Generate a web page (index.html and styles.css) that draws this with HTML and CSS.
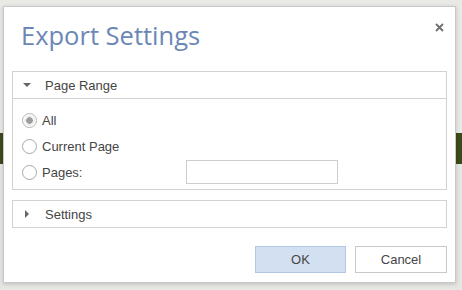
FILE: index.html
```html
<!DOCTYPE html>
<html lang="en">
<head>
  <meta charset="UTF-8">
  <meta name="viewport" content="width=device-width, initial-scale=1.0">
  <title>Export Settings</title>
  <link rel="stylesheet" href="styles.css">
</head>
<body>
<div class="backdrop">
  <div class="dialog">
    <div class="dialog-header">
      <h1 class="dialog-title">Export Settings</h1>
      <button class="close-button" title="Close">
        <svg width="9" height="9" viewBox="0 0 9 9"><path d="M1 1 L8 8 M8 1 L1 8" stroke="#6f6f6f" stroke-width="1.8"/></svg>
      </button>
    </div>

    <div class="section">
      <div class="section-head">
        <svg class="caret" width="8" height="8" viewBox="0 0 8 8"><path d="M0 2 L8 2 L4 6 Z" fill="#666"/></svg>
        <span>Page Range</span>
      </div>
      <div class="section-body">
        <label class="option"><input type="radio" name="range" checked> All</label>
        <label class="option"><input type="radio" name="range"> Current Page</label>
        <div class="option">
          <label class="pages-label"><input type="radio" name="range"> Pages:</label>
          <input type="text" class="pages-input">
        </div>
      </div>
    </div>

    <div class="section">
      <div class="section-head closed">
        <svg class="caret" width="8" height="8" viewBox="0 0 8 8"><path d="M2 0 L6 4 L2 8 Z" fill="#666"/></svg>
        <span>Settings</span>
      </div>
    </div>

    <div class="dialog-buttons">
      <button class="btn btn-primary">OK</button>
      <button class="btn">Cancel</button>
    </div>
  </div>
</div>
</body>
</html>
```

FILE: styles.css
```css
body {
  margin: 0px;
  font-family: "Liberation Sans", Arial, sans-serif;
  color: #454545;
}

.backdrop {
  width: 462px;
  height: 290px;
  padding: 6px 0 0 3px;
  box-sizing: border-box;
  /* the green bar of the page behind the dialog */
  background: linear-gradient(to bottom, #e9e9e6 0px, #e9e9e6 133px, #3c4a1c 133px, #3c4a1c 164px, #e6e6e3 164px);
}

.dialog {
  width: 453px;
  height: 277px;
  box-sizing: border-box;
  background: #ffffff;
  border: 1px solid #c9c9c9;
  box-shadow: 0 1px 4px rgba(0, 0, 0, 0.18);
  padding: 0 8px;
  display: flex;
  flex-direction: column;
}

.dialog-header {
  display: flex;
  justify-content: space-between;
  align-items: flex-start;
  padding: 13px 3px 0 9px;
  height: 51px;
  box-sizing: border-box;
  margin-top: 0;
}

.dialog-title {
  margin: 0;
  font-family: "Open Sans", sans-serif;
  font-weight: 400;
  font-size: 25.5px;
  line-height: 30px;
  color: #6b87b5;
}

.close-button {
  border: none;
  background: none;
  padding: 0;
  margin-top: 3px;
  width: 9px;
  height: 9px;
  cursor: pointer;
}

.close-button svg {
  display: block;
}

.section {
  border: 1px solid #d2d2d2;
  margin-bottom: 10px;
}

.dialog-header + .section {
  margin-top: 13px;
}

.section-head {
  display: flex;
  align-items: center;
  height: 26px;
  font-size: 13px;
  padding-left: 10px;
  gap: 14px;
}

.caret {
  flex-shrink: 0;
}

.section-body {
  border-top: 1px solid #d2d2d2;
  padding: 8px 0 4px 9px;
}

.option {
  display: flex;
  align-items: center;
  height: 26px;
  font-size: 13px;
  gap: 5px;
}

.pages-label {
  display: flex;
  align-items: center;
  gap: 5px;
  width: 159px;
}

.option input[type="radio"] {
  -webkit-appearance: none;
  appearance: none;
  margin: 0;
  width: 15px;
  height: 15px;
  border: 1px solid #a9a9a9;
  border-radius: 50%;
  background: #fff;
  box-sizing: border-box;
}

.option input[type="radio"]:checked {
  border-color: #b4b4b4;
  background: radial-gradient(circle, #9c9c9c 0px, #9c9c9c 3px, #eeeeee 3.5px, #eeeeee 5px, #fff 5.5px);
}

.pages-input {
  width: 152px;
  height: 24px;
  box-sizing: border-box;
  border: 1px solid #cdcdcd;
  margin: 0;
}

.dialog-buttons {
  display: flex;
  justify-content: flex-end;
  gap: 9px;
  margin-top: 8px;
}

.btn {
  width: 92px;
  height: 27px;
  border: 1px solid #c8c8c8;
  background: #fff;
  font-family: "Liberation Sans", Arial, sans-serif;
  font-size: 13px;
  color: #454545;
}

.btn-primary {
  width: 91px;
  background: #d3e0f1;
  border-color: #b3c6e2;
}
```
